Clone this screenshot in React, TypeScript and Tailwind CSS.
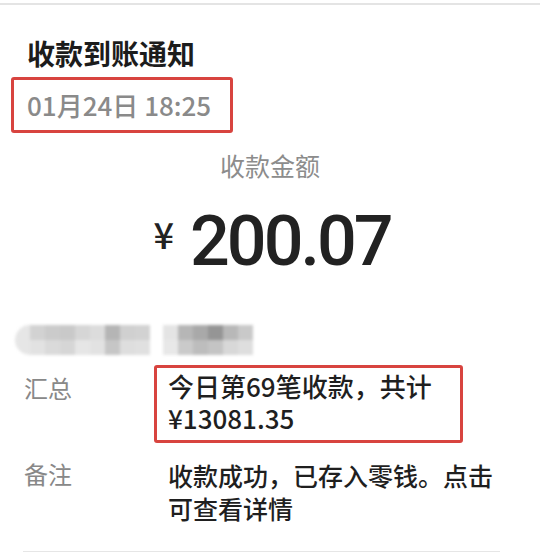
const cjk = "font-['Noto_Sans_CJK_SC','Noto_Sans',sans-serif]"

const blurTop = ["#d2d2d2", "#cbcbcb", "#c9c9c9", "#d6d6d6", "#dcdcdc", "#b5b5b5", "#d0d0d0", "#d2d2d2"]
const blurBottom = ["#e2e2e2", "#dadada", "#d6d6d6", "#e6e6e6", "#e2e2e2", "#c6c6c6", "#dedede", "#e0e0e0"]
const blurTop2 = ["#e4e4e4", "#b6b6b6", "#a9a9a9", "#959595", "#b8b8b8", "#c9c9c9"]
const blurBottom2 = ["#e8e8e8", "#cacaca", "#bdbdbd", "#c4c4c4", "#d8d8d8", "#dedede"]

function BlurBlock({ top, bottom }: { top: string[]; bottom: string[] }) {
  return (
    <div className="flex flex-col">
      <div className="flex">
        {top.map((c, i) => (
          <div key={i} className="h-[15px] w-[15px]" style={{ backgroundColor: c }} />
        ))}
      </div>
      <div className="flex">
        {bottom.map((c, i) => (
          <div key={i} className="h-[15px] w-[15px]" style={{ backgroundColor: c }} />
        ))}
      </div>
    </div>
  )
}

export default function App() {
  return (
    <div className={`relative h-[553px] w-[540px] overflow-hidden bg-white ${cjk}`}>
      <div className="mt-[3px] border-t-2 border-[#e4e4e4]" />

      <h1 className="ml-[27px] mt-[28px] text-[28px] font-bold leading-[40px] text-[#1c1c1c]">
        收款到账通知
      </h1>

      <div className="ml-[11px] mt-[4px] flex h-[56px] w-[222px] items-center rounded-[3px] border-[3px] border-[#d8443f] pl-[13px]">
        <span className="text-[26px] font-medium leading-none text-[#8a8a8a]">01月24日 18:25</span>
      </div>

      <div className="mt-[14px] flex flex-col items-center">
        <p className="text-[25px] leading-[36px] text-[#8c8c8c]">收款金额</p>
        <div className="mt-[28px] flex items-start pl-[4px]">
          <span className="mr-[16px] mt-[4px] text-[36px] font-medium leading-none text-[#222]">¥</span>
          <span className="font-['Roboto',sans-serif] text-[70px] font-medium leading-[60px] tracking-[-3px] text-[#222]">
            200.07
          </span>
        </div>
      </div>

      <div className="ml-[15px] mt-[54px] flex items-center gap-[13px] blur-[1.5px]">
        <div className="flex items-center">
          <div className="h-[30px] w-[15px] rounded-l-full bg-[#e6e6e6]" />
          <BlurBlock top={blurTop} bottom={blurBottom} />
        </div>
        <BlurBlock top={blurTop2} bottom={blurBottom2} />
      </div>

      <div className="mt-[10px] flex">
        <div className="w-[154px] pl-[24px] pt-[8px] text-[24px] leading-[30px] text-[#888]">汇总</div>
        <div className="h-[78px] w-[309px] rounded-[3px] border-[3px] border-[#d8443f] pl-[11px] pt-[2px] text-[26px] font-medium leading-[32px] text-[#1f1f1f]">
          <p>今日第69笔收款，共计</p>
          <p>¥13081.35</p>
        </div>
      </div>

      <div className="mt-[16px] flex">
        <div className="w-[168px] pl-[24px] text-[24px] leading-[30px] text-[#888]">备注</div>
        <div className="w-[340px] text-[25px] font-medium leading-[33px] text-[#1f1f1f]">
          <p>收款成功，已存入零钱。点击</p>
          <p>可查看详情</p>
        </div>
      </div>

      <div className="ml-[23px] mt-[26px] w-[477px] border-t border-[#e6e6e6]" />
    </div>
  )
}
